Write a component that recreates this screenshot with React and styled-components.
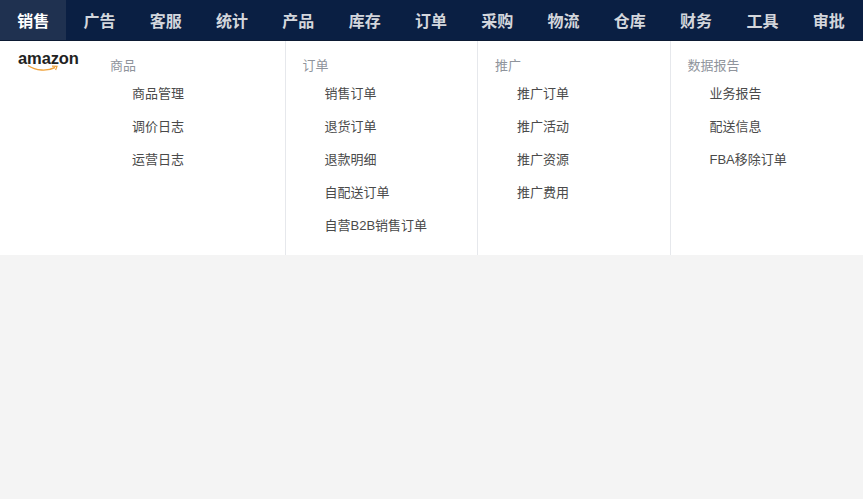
import React from 'react';
import styled, { createGlobalStyle } from 'styled-components';

const GlobalStyle = createGlobalStyle`
  html, body {
    margin: 0;
    padding: 0;
    height: 100%;
    background: #f4f4f4;
    font-family: "Liberation Sans", "Noto Sans CJK SC", sans-serif;
  }
`;

const NavBar = styled.nav`
  display: grid;
  grid-template-columns: repeat(13, 66.3px);
  height: 40px;
  background: #0a1f43;
  border-bottom: 1px solid #0c1a33;
  overflow: hidden;
`;

const NavItem = styled.div`
  display: flex;
  align-items: center;
  justify-content: center;
  font-size: 16px;
  font-weight: 700;
  color: ${props => (props.active ? '#ffffff' : '#d3d6dc')};
  background: ${props => (props.active ? '#1f3150' : 'transparent')};
`;

const Panel = styled.div`
  display: grid;
  grid-template-columns: 93px 192.5px 192.5px 192.5px 192.5px;
  height: 214px;
  background: #ffffff;
`;

const LogoBox = styled.div`
  position: relative;
  padding: 8px 0 0 18px;
`;

const LogoText = styled.div`
  font-size: 16.5px;
  line-height: 18px;
  font-weight: 700;
  letter-spacing: -0.1px;
  color: #222222;
`;

const Smile = styled.svg`
  display: block;
  margin: -3px 0 0 9px;
`;

const Column = styled.div`
  padding: 16px 0 0 17px;
  box-sizing: border-box;
  border-right: ${props => (props.last ? 'none' : '1px solid #e6e8ec')};
`;

const ColumnTitle = styled.div`
  font-size: 13px;
  line-height: 17px;
  color: #8f949c;
`;

const LinkList = styled.div`
  display: flex;
  flex-direction: column;
  margin-top: 3px;
  padding-left: 22px;
`;

const LinkItem = styled.div`
  font-size: 13px;
  line-height: 33px;
  color: #4a4a4a;
`;

const navItems = ['销售', '广告', '客服', '统计', '产品', '库存', '订单', '采购', '物流', '仓库', '财务', '工具', '审批'];

const columns = [
  { title: '商品', links: ['商品管理', '调价日志', '运营日志'] },
  { title: '订单', links: ['销售订单', '退货订单', '退款明细', '自配送订单', '自营B2B销售订单'] },
  { title: '推广', links: ['推广订单', '推广活动', '推广资源', '推广费用'] },
  { title: '数据报告', links: ['业务报告', '配送信息', 'FBA移除订单'] },
];

export default function App() {
  return (
    <>
      <GlobalStyle />
      <NavBar>
        {navItems.map((item, i) => (
          <NavItem key={item} active={i === 0}>{item}</NavItem>
        ))}
      </NavBar>
      <Panel>
        <LogoBox>
          <LogoText>amazon</LogoText>
          <Smile width="36" height="9" viewBox="0 0 36 9">
            <path d="M1 1.5C9 7 20 7.5 28 3.5" fill="none" stroke="#f0a23a" strokeWidth="1.4" />
            <path d="M25 2.2L30 2.4L28.6 6" fill="none" stroke="#f0a23a" strokeWidth="1.2" />
          </Smile>
        </LogoBox>
        {columns.map((col, i) => (
          <Column key={col.title} last={i === columns.length - 1}>
            <ColumnTitle>{col.title}</ColumnTitle>
            <LinkList>
              {col.links.map(link => (
                <LinkItem key={link}>{link}</LinkItem>
              ))}
            </LinkList>
          </Column>
        ))}
      </Panel>
    </>
  );
}
